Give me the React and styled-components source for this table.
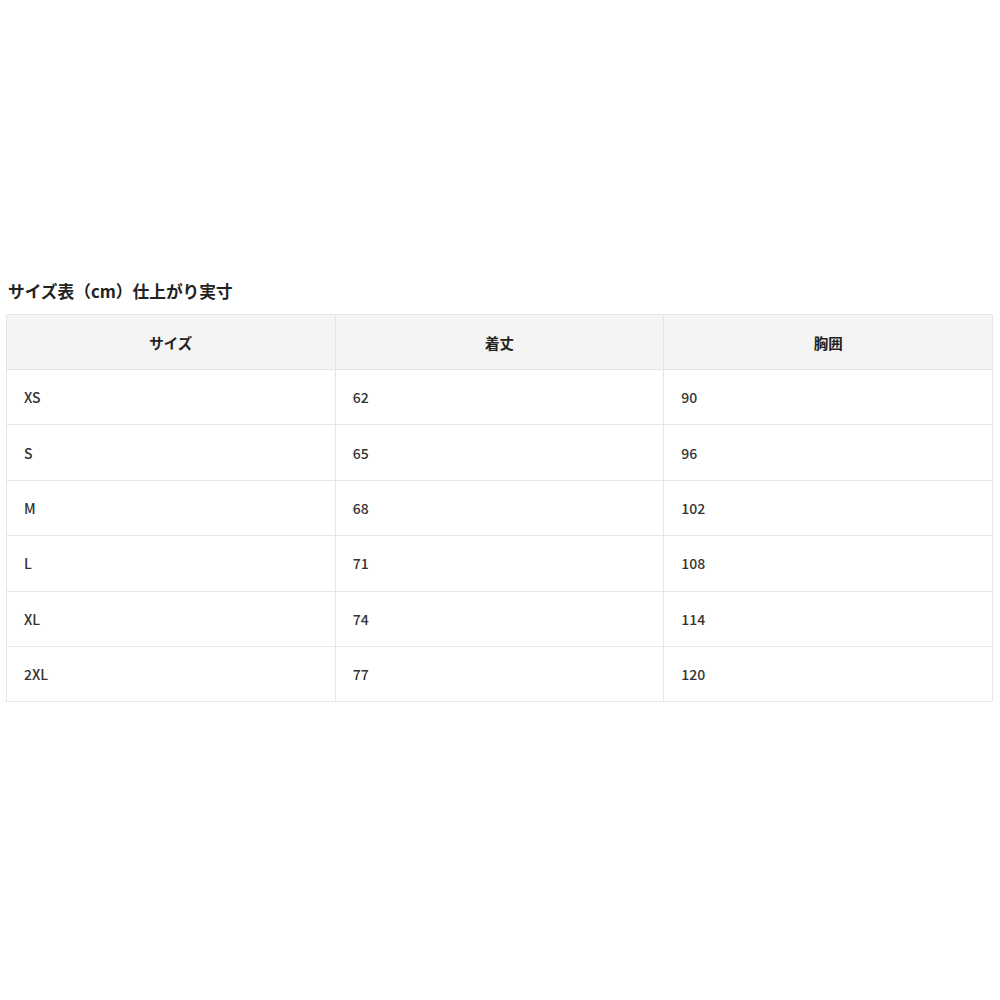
import styled, { createGlobalStyle } from 'styled-components';

const GlobalStyle = createGlobalStyle`
  html, body {
    margin: 0;
    padding: 0;
    background: #fff;
  }
  body {
    font-family: "Noto Sans CJK JP", "Noto Sans", sans-serif;
    color: #333;
  }
`;

const Page = styled.div`
  width: 1000px;
  height: 1000px;
  padding: 278px 7px 0 6px;
  box-sizing: border-box;
`;

const Title = styled.h2`
  margin: 0 0 10px 2px;
  font-size: 16.7px;
  line-height: 26px;
  font-weight: 700;
  color: #222;
`;

const Table = styled.table`
  width: 100%;
  border-collapse: collapse;
  table-layout: fixed;
  border: 1px solid #e6e6e6;
`;

const Th = styled.th`
  height: 54px;
  background: #f4f4f4;
  border: 1px solid #e6e6e6;
  font-size: 14.5px;
  font-weight: 700;
  color: #222;
  text-align: center;
  padding: 0;
`;

const Td = styled.td`
  height: 54.4px;
  border: 1px solid #e6e6e6;
  font-size: 14px;
  font-weight: 500;
  color: #333;
  padding: 0 0 0 17px;
  text-align: left;
`;

const rows = [
  ['XS', '62', '90'],
  ['S', '65', '96'],
  ['M', '68', '102'],
  ['L', '71', '108'],
  ['XL', '74', '114'],
  ['2XL', '77', '120'],
];

export default function App() {
  return (
    <Page>
      <GlobalStyle />
      <Title>サイズ表（cm）仕上がり実寸</Title>
      <Table>
        <thead>
          <tr>
            <Th>サイズ</Th>
            <Th>着丈</Th>
            <Th>胸囲</Th>
          </tr>
        </thead>
        <tbody>
          {rows.map((r) => (
            <tr key={r[0]}>
              {r.map((c, i) => (
                <Td key={i}>{c}</Td>
              ))}
            </tr>
          ))}
        </tbody>
      </Table>
    </Page>
  );
}
